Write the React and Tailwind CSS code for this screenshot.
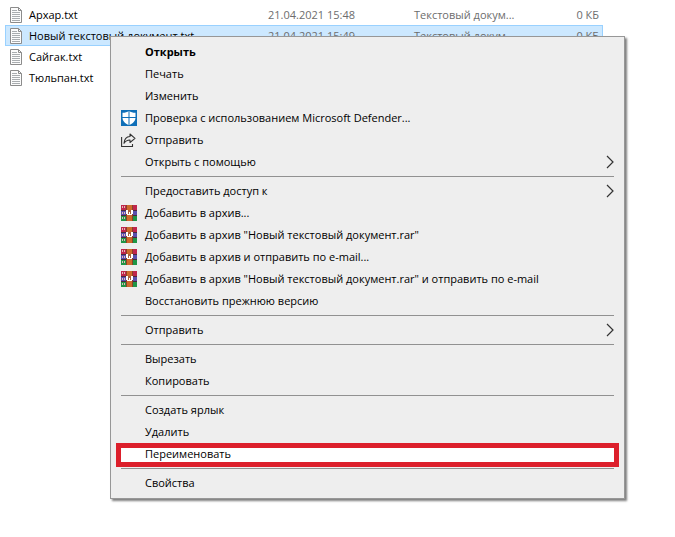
import React from 'react';

const files = [
    { name: 'Архар.txt', date: '21.04.2021 15:48', type: 'Текстовый докум...', size: '0 КБ' },
    { name: 'Новый текстовый документ.txt', date: '21.04.2021 15:49', type: 'Текстовый докум...', size: '0 КБ', selected: true },
    { name: 'Сайгак.txt' },
    { name: 'Тюльпан.txt' },
];

// Each inner array is a group, groups are divided by a separator line
const menuGroups = [
    [
        { label: 'Открыть', bold: true },
        { label: 'Печать' },
        { label: 'Изменить' },
        { label: 'Проверка с использованием Microsoft Defender...', icon: 'defender' },
        { label: 'Отправить', icon: 'share' },
        { label: 'Открыть с помощью', submenu: true },
    ],
    [
        { label: 'Предоставить доступ к', submenu: true },
        { label: 'Добавить в архив...', icon: 'rar' },
        { label: 'Добавить в архив "Новый текстовый документ.rar"', icon: 'rar' },
        { label: 'Добавить в архив и отправить по e-mail...', icon: 'rar' },
        { label: 'Добавить в архив "Новый текстовый документ.rar" и отправить по e-mail', icon: 'rar' },
        { label: 'Восстановить прежнюю версию' },
    ],
    [{ label: 'Отправить', submenu: true }],
    [{ label: 'Вырезать' }, { label: 'Копировать' }],
    [{ label: 'Создать ярлык' }, { label: 'Удалить' }, { label: 'Переименовать', marked: true }],
    [{ label: 'Свойства' }],
];

const TextFileIcon = () => (
    <svg width="14" height="16" viewBox="0 0 14 16" fill="none" className="block">
        <path d="M1.5 .5h8l3 3v12h-11z" fill="#fcfcfc" stroke="#8c8c8c" />
        <path d="M9.5 .5v3h3" stroke="#8c8c8c" />
        <path d="M3 3.5h5M3 5.5h8M3 7.5h8M3 9.5h8M3 11.5h8M3 13.5h8" stroke="#a9adb0" />
    </svg>
);

const DefenderIcon = () => (
    <svg width="16" height="16" viewBox="0 0 16 16">
        <path d="M0 0h16v16H0z" fill="#0f6fb8" />
        <path d="M8 1C9.7 2.2 11.800 2.800 14.500 2.800V7.500C14.500 11 12 13.500 8 15.300C4 13.500 1.500 11 1.500 7.500V2.800C4.200 2.800 6.300 2.200 8 1z" fill="#fff" />
        <path d="M7.500 1h1v15h-1zM1 7h14v1H1z" fill="#0f6fb8" />
    </svg>
);

const ShareIcon = () => (
    <svg width="16" height="16" viewBox="0 0 16 16" fill="none" stroke="#333" strokeWidth="1.1">
        <path d="M.6 5v9.500h10.900V12" />
        <path d="M9 2l5 4.300-5 4.200V8C6.500 8 4.500 8.800 3 11.300c.3-3.900 2.500-6.600 6-6.800z" strokeLinejoin="round" />
    </svg>
);

const RarIcon = () => (
    <svg width="16" height="16" viewBox="0 0 16 16">
        <path d="M0 0h16v5H0z" fill="#c0264c" />
        <path d="M0 5h16v6H0z" fill="#5a4fae" />
        <path d="M0 11h16v5H0z" fill="#1f9646" />
        <path d="M0 5h16v1H0zM0 10h16v1H0z" fill="#4a2a3c" />
        <path d="M1 1h1v2H1zM3 1h1v2H3zM1 7h1v2H1zM3 7h1v2H3zM1 12h1v2H1zM3 12h1v2H3z" fill="#e2b8b8" />
        <path d="M6 0h5v16H6z" fill="#cf6a2c" />
        <path d="M5 0h1v16H5zM11 0h1v16h-1z" fill="#8a4226" />
        <path d="M6 5h5v5H6z" fill="#a8603c" />
        <path d="M5 5h2v4H5zM10 5h2v4h-2zM6 9h5v1H6zM8 7h1v3H8z" fill="#fff" />
    </svg>
);

const Chevron = () => (
    <svg width="8" height="14" viewBox="0 0 8 14" fill="none" stroke="#333" strokeWidth="1.200">
        <path d="M1 1l6 6-6 6" />
    </svg>
);

const icons = {
    defender: <DefenderIcon />,
    share: <ShareIcon />,
    rar: <RarIcon />,
};

const FileRow = ({ file }) => (
    <tr className={`h-[21px] whitespace-nowrap ${file.selected ? 'bg-[#cce8ff] outline outline-1 -outline-offset-1 outline-[#99d1ff]' : ''}`}>
        <td className="w-[263px] p-0 pl-1 text-black">
            <div className="flex items-center gap-1.5">
                <TextFileIcon />
                <span>{file.name}</span>
            </div>
        </td>
        <td className="w-[146px] p-0 text-[#6d6d6d]">{file.date}</td>
        <td className="p-0 text-[#6d6d6d]">{file.type}</td>
        <td className="w-16 p-0 pr-1 text-right text-[#6d6d6d]">{file.size}</td>
    </tr>
);

const MenuItem = ({ item }) => (
    <button
        type="button"
        role="menuitem"
        className="relative flex h-[22px] w-full items-center px-[5px] text-left whitespace-nowrap"
    >
        {item.marked && <span className="absolute inset-x-0 top-0 h-6 border-5 border-[#dc1f2b] bg-white" />}
        <span className="w-6 shrink-0">{icons[item.icon]}</span>
        <span className={`relative grow ${item.bold ? 'font-bold' : ''}`}>{item.label}</span>
        {item.submenu && <Chevron />}
    </button>
);

const ContextMenu = () => (
    <div
        role="menu"
        className="absolute top-9 left-[110px] w-[515px] border border-[#979797] bg-[#eeeeee] px-[5px] py-1 text-black shadow-[2px_2px_2px_rgba(0,0,0,0.5)]"
    >
        {menuGroups.map((group, i) => (
            <div key={i}>
                {i > 0 && <hr className="mx-[5px] my-[3px] border-t border-[#919191]" />}
                {group.map((item) => (
                    <MenuItem key={item.label} item={item} />
                ))}
            </div>
        ))}
    </div>
);

const App = () => (
    <main className="relative min-h-screen bg-white pt-1 pl-[5px] font-['Open_Sans','Noto_Sans',sans-serif] text-[11px] leading-4">
        <table className="w-full max-w-[598px] table-fixed border-collapse">
            <tbody>
                {files.map((file) => (
                    <FileRow key={file.name} file={file} />
                ))}
            </tbody>
        </table>
        <ContextMenu />
    </main>
);

export default App;
